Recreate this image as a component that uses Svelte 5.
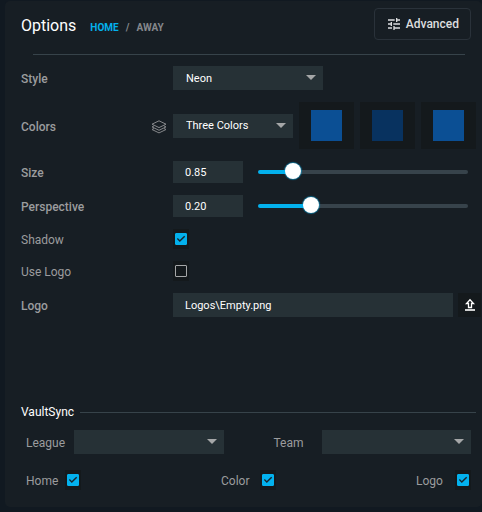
<script lang="ts">
    let side = $state('home');
    let style = $state('Neon');
    let colorMode = $state('Three Colors');
    let size = $state('0.85');
    let perspective = $state('0.20');
    let sizeSlider = $state(14);
    let perspectiveSlider = $state(23);
    let shadow = $state(true);
    let useLogo = $state(false);
    let logoPath = $state('Logos\\Empty.png');
    let sync = $state([
        { id: 'home', label: 'Home', checked: true },
        { id: 'color', label: 'Color', checked: true },
        { id: 'logo', label: 'Logo', checked: true },
    ]);

    const swatches = ['#0b4f94', '#08325f', '#0b4f94'];
</script>

<main class="panel">
    <header>
        <h1>Options</h1>
        <nav>
            <a href="#home" class:active={side === 'home'} onclick={() => (side = 'home')}>HOME</a>
            <span>/</span>
            <a href="#away" class:active={side === 'away'} onclick={() => (side = 'away')}>AWAY</a>
        </nav>
        <button class="advanced">
            <svg width="16" height="16" viewBox="0 0 24 24" fill="currentColor">
                <path d="M3 17v2h6v-2H3zM3 5v2h10V5H3zm10 16v-2h8v-2h-8v-2h-2v6h2zM7 9v2H3v2h4v2h2V9H7zm14 4v-2H11v2h10zm-6-4h2V7h4V5h-4V3h-2v6z" />
            </svg>
            Advanced
        </button>
    </header>

    <hr />

    <section class="rows">
        <div class="row">
            <label class="name" for="style">Style</label>
            <div class="select wide">
                <select id="style" bind:value={style}>
                    <option>Neon</option>
                </select>
            </div>
        </div>

        <div class="row">
            <label class="name" for="colors">
                Colors
                <svg width="16" height="14" viewBox="0 0 16 14" fill="none" stroke="#85878a" stroke-linejoin="round">
                    <path d="M8 .8 15 4.2 8 7.6 1 4.2z" />
                    <path d="M3 5.9 1 6.9l7 3.4 7-3.4-2-1" />
                    <path d="M3 8.5 1 9.5l7 3.4 7-3.4-2-1" />
                </svg>
            </label>
            <div class="select narrow">
                <select id="colors" bind:value={colorMode}>
                    <option>Three Colors</option>
                </select>
            </div>
            <div class="swatches">
                {#each swatches as color, i}
                    <button class="swatch" aria-label="Color {i + 1}">
                        <span style:background-color={color}></span>
                    </button>
                {/each}
            </div>
        </div>

        <div class="row">
            <label class="name" for="size">Size</label>
            <input class="field number" id="size" type="text" bind:value={size} />
            <input
                type="range"
                aria-label="Size"
                bind:value={sizeSlider}
                style:--fill="{sizeSlider}%"
            />
        </div>

        <div class="row">
            <label class="name" for="perspective">Perspective</label>
            <input class="field number" id="perspective" type="text" bind:value={perspective} />
            <input
                type="range"
                aria-label="Perspective"
                bind:value={perspectiveSlider}
                style:--fill="{perspectiveSlider}%"
            />
        </div>

        <div class="row">
            <label class="name light" for="shadow">Shadow</label>
            <span class="check"><input id="shadow" type="checkbox" bind:checked={shadow} /></span>
        </div>

        <div class="row">
            <label class="name light" for="use-logo">Use Logo</label>
            <span class="check"><input id="use-logo" type="checkbox" bind:checked={useLogo} /></span>
        </div>

        <div class="row">
            <label class="name" for="logo-path">Logo</label>
            <input class="field path" id="logo-path" type="text" bind:value={logoPath} />
            <button class="upload" aria-label="Choose logo">
                <svg width="12" height="14" viewBox="0 0 12 14" fill="none" stroke="#fff">
                    <path d="M6 1.8 9.5 5.5h-2v4h-3v-4h-2z" stroke-width="1.3" />
                    <path d="M1 12h10" stroke-width="1.6" />
                </svg>
            </button>
        </div>
    </section>

    <section class="sync">
        <h2>VaultSync</h2>
        <div class="pickers">
            <label for="league">League</label>
            <div class="select"><select id="league"></select></div>
            <label class="team" for="team">Team</label>
            <div class="select"><select id="team"></select></div>
        </div>
        <div class="flags">
            {#each sync as flag}
                <div class="flag">
                    <label for="sync-{flag.id}">{flag.label}</label>
                    <span class="check">
                        <input id="sync-{flag.id}" type="checkbox" bind:checked={flag.checked} />
                    </span>
                </div>
            {/each}
        </div>
    </section>
</main>

<style>
    :global(body) {
        background: #111921;
        font-family: Roboto, sans-serif;
    }

    .panel {
        --accent: #03b1ed;
        --field: #263136;
        --well: #14191c;
        --muted: #9b9c9e;

        box-sizing: border-box;
        margin: 1px 0 4px 5px;
        padding: 7px 6px 17px 16px;
        border-radius: 5px;
        background: #171e24;
        color: var(--muted);
        font-size: 12px;
        line-height: 16px;
    }

    button,
    input,
    select {
        box-sizing: border-box;
        margin: 0;
        border: 0;
        border-radius: 0;
        font-family: inherit;
        color: #fff;
    }

    label {
        padding-top: 2px;
    }

    header {
        display: flex;
        align-items: center;
        padding-right: 5px;
    }

    h1 {
        margin: 0;
        padding-top: 4px;
        font-size: 16px;
        font-weight: 400;
        line-height: 28px;
        color: #fff;
    }

    nav {
        display: flex;
        gap: 7px;
        padding-top: 8px;
        margin-left: 14px;
        font-size: 10px;
        font-weight: 700;
        color: #85888c;
    }

    nav a {
        color: #85888c;
        text-decoration: none;
    }

    nav a.active {
        color: var(--accent);
    }

    .advanced {
        display: flex;
        align-items: center;
        gap: 4px;
        height: 32px;
        margin-left: auto;
        padding: 0 11px;
        border: 1px solid #2a323a;
        border-radius: 4px;
        background: transparent;
        font-size: 12px;
        line-height: 16px;
        font-weight: 500;
        color: #dcdddf;
    }

    hr {
        height: 1px;
        margin: 14px 11px 11px 12px;
        border: 0;
        background: #37434a;
    }

    .rows {
        display: flex;
        flex-direction: column;
        gap: 12px;
    }

    .row {
        display: flex;
        align-items: center;
    }

    .name {
        display: flex;
        flex: none;
        align-items: center;
        justify-content: space-between;
        box-sizing: border-box;
        width: 152px;
        padding-right: 6px;
        font-weight: 500;
    }

    .name.light {
        font-weight: 400;
    }

    .select {
        position: relative;
    }

    .select.wide {
        width: 150px;
    }

    .select.narrow {
        width: 120px;
    }

    .select::after {
        content: '';
        position: absolute;
        top: 9px;
        right: 7px;
        border: 5px solid transparent;
        border-top-color: #a5a7a8;
        border-bottom: 0;
        pointer-events: none;
    }

    select {
        display: block;
        width: 100%;
        height: 24px;
        padding: 0 13px;
        appearance: none;
        background: var(--field);
        font-size: 11px;
    }

    .swatches {
        display: flex;
        flex: 1;
        gap: 6px;
        margin-left: 6px;
    }

    .swatch {
        display: flex;
        flex: 1;
        justify-content: center;
        height: 47px;
        padding: 8px 0;
        background: var(--well);
    }

    .swatch span {
        width: 31px;
        height: 31px;
    }

    .field {
        height: 24px;
        padding: 0 12px;
        background: var(--field);
        font-size: 11px;
    }

    .number {
        width: 70px;
        height: 22px;
    }

    .path {
        flex: 1;
        min-width: 0;
    }

    input[type='range'] {
        flex: 1;
        min-width: 0;
        height: 16px;
        margin: 0 8px 0 15px;
        appearance: none;
        background: transparent;
    }

    input[type='range']::-webkit-slider-runnable-track {
        height: 4px;
        border-radius: 2px;
        background: linear-gradient(to right, var(--accent) var(--fill), #37434b var(--fill));
    }

    input[type='range']::-webkit-slider-thumb {
        width: 16px;
        height: 16px;
        margin-top: -7px;
        appearance: none;
        border: 0;
        border-radius: 50%;
        background: #fff;
        box-shadow: 0 0 1px 1px #03b1ed88;
    }

    .check {
        display: flex;
        align-items: center;
        justify-content: center;
        width: 16px;
        height: 20px;
        background: var(--well);
    }

    input[type='checkbox'] {
        display: grid;
        place-items: center;
        width: 12px;
        height: 12px;
        appearance: none;
        border: 1px solid #a5a7a8;
        border-radius: 1px;
    }

    input[type='checkbox']:checked {
        border-color: var(--accent);
        background: var(--accent);
    }

    input[type='checkbox']:checked::before {
        content: '';
        width: 10px;
        height: 10px;
        background: #16252e;
        clip-path: polygon(9% 50%, 18% 41%, 38% 61%, 82% 17%, 92% 27%, 38% 80%);
    }

    .upload {
        display: flex;
        align-items: center;
        justify-content: center;
        width: 23px;
        height: 24px;
        margin: 0 -5px 0 5px;
        padding: 0;
        background: var(--well);
    }

    .sync {
        margin-top: 87px;
    }

    h2 {
        display: flex;
        align-items: center;
        gap: 6px;
        margin: 0;
        font-size: 12px;
        font-weight: 400;
        color: #fff;
    }

    h2::after {
        content: '';
        flex: 1;
        height: 1px;
        background: #37434a;
    }

    .pickers {
        display: grid;
        grid-template-columns: 48px 1fr 98px 1fr;
        align-items: center;
        margin: 10px 5px 16px;
    }

    .team {
        padding-left: 50px;
    }

    .flags {
        display: flex;
        justify-content: space-between;
        padding: 0 5px;
    }

    .flag {
        display: flex;
        align-items: center;
    }

    .flag label {
        width: 39px;
    }
</style>
